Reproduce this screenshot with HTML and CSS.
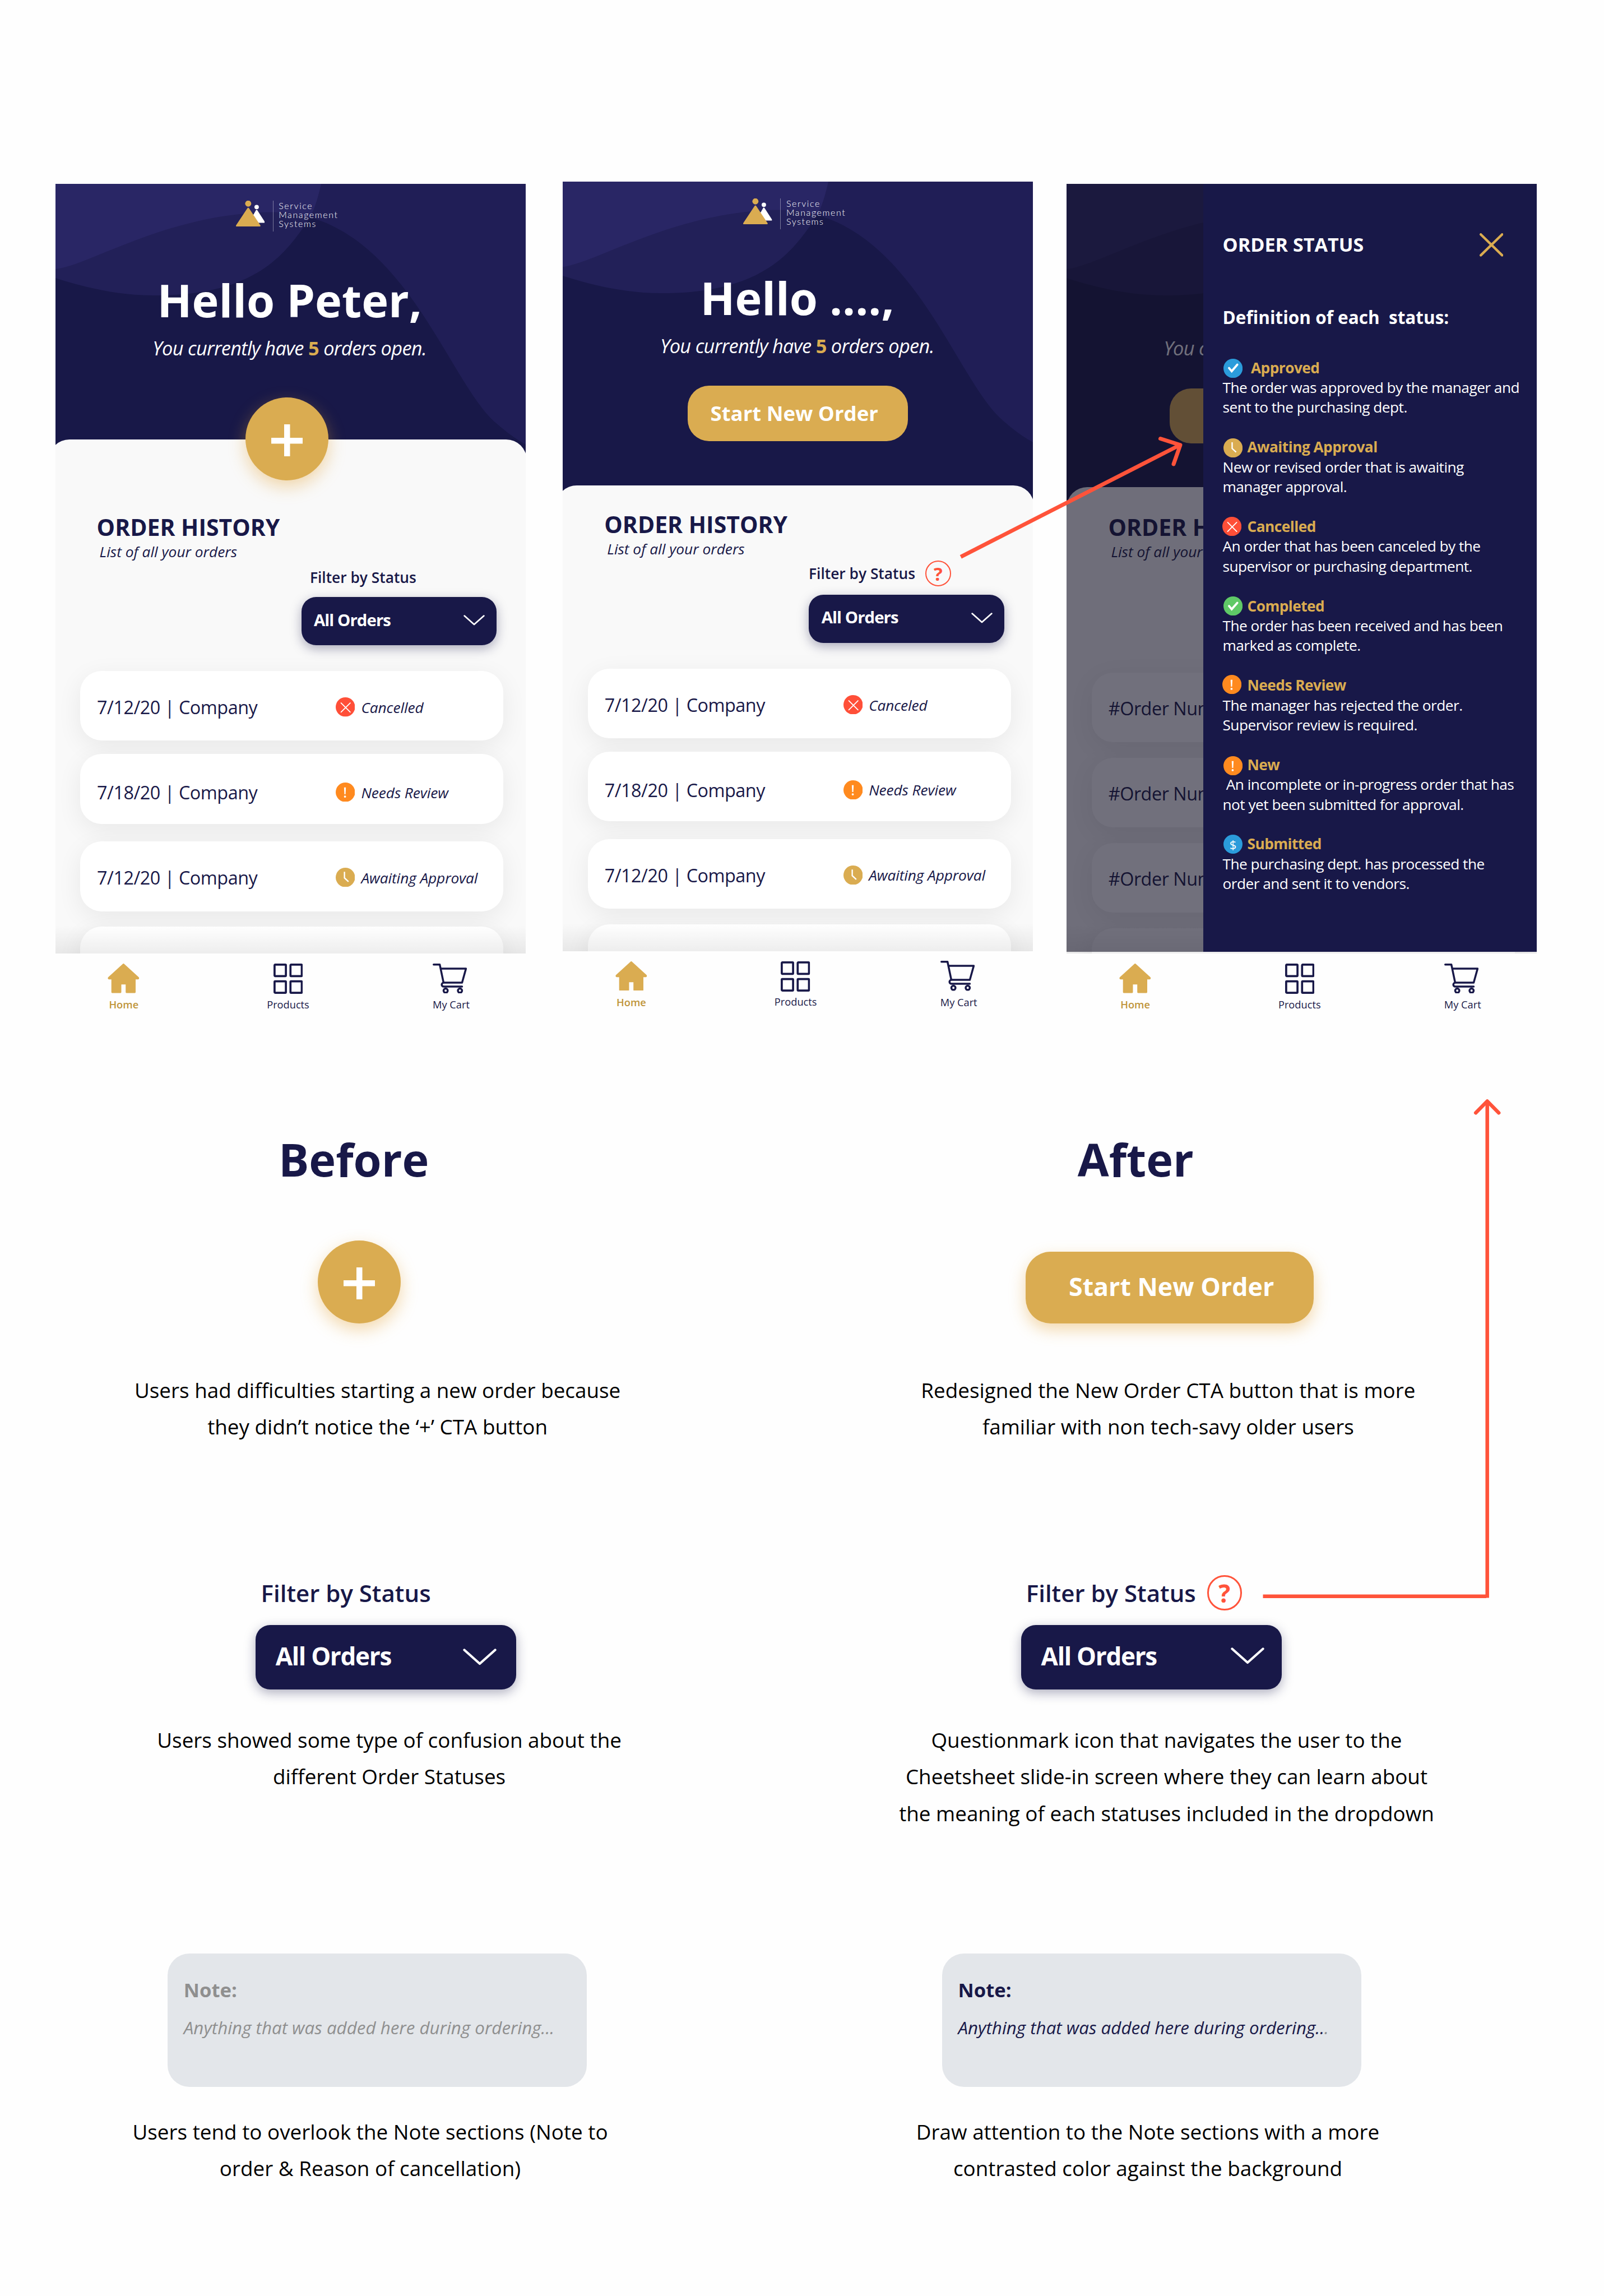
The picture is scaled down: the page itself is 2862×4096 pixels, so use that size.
FILE: index.html
```html
<!DOCTYPE html>
<html lang="en">
<head>
<meta charset="utf-8">
<title>Order history redesign</title>
<link rel="stylesheet" href="styles.css">
</head>
<body>
<svg class="defs" width="0" height="0" aria-hidden="true">
  <symbol id="logo" viewBox="36 78 236 213">
    <circle cx="205" cy="130" r="18" fill="#fff"/>
    <path d="M205 158L267 254H150Z" fill="#fff" stroke="#fff" stroke-width="11" stroke-linejoin="round"/>
    <circle cx="136" cy="102" r="25" fill="#daac51"/>
    <path d="M136 144L228 283H44Z" fill="#daac51" stroke="#daac51" stroke-width="16" stroke-linejoin="round"/>
  </symbol>
  <symbol id="home" viewBox="0 0 102 95">
    <path d="M51 3L98 46Q99 48 97 48H87V92H61V64H41V92H15V48H5Q3 48 4 46Z" fill="currentColor" stroke="currentColor" stroke-width="6" stroke-linejoin="round"/>
  </symbol>
  <symbol id="grid" viewBox="0 0 52.4 54">
    <g fill="none" stroke="currentColor" stroke-width="3.7"><rect x="1.9" y="1.9" width="20.2" height="20.4" rx="1"/><rect x="30.3" y="1.9" width="20.2" height="20.4" rx="1"/><rect x="1.9" y="31.7" width="20.2" height="20.4" rx="1"/><rect x="30.3" y="31.7" width="20.2" height="20.4" rx="1"/></g>
  </symbol>
  <symbol id="cart" viewBox="54 66 280 246">
    <g fill="none" stroke="currentColor" stroke-width="16" stroke-linecap="round" stroke-linejoin="round"><path d="M62 74H112L143 222M119 107H326L294 222H144A16 16 0 0 0 144 254H294"/><circle cx="160" cy="287" r="17"/><circle cx="277" cy="287" r="17"/></g>
  </symbol>
  <symbol id="chevron" viewBox="0 0 60 30">
    <path d="M2.5 2.5L30 27L57.500 2.500" fill="none" stroke="#fff" stroke-width="4.300" stroke-linecap="round" stroke-linejoin="round"/>
  </symbol>
  <symbol id="cancelled" viewBox="0 0 36 36">
    <circle cx="18" cy="18" r="18" fill="#ff4f38"/><path d="M10 10.500L27 27.500M27 10.500L10 27.500" stroke="#fff" stroke-width="1.900" stroke-linecap="round"/>
  </symbol>
  <symbol id="alert" viewBox="0 0 36 36">
    <circle cx="18" cy="18" r="18" fill="#ff8a1f"/><path d="M15.500 9.200H19L18.300 22H16.200Z" fill="#fff"/><circle cx="17.300" cy="26.200" r="2" fill="#fff"/>
  </symbol>
  <symbol id="clock" viewBox="0 0 36 36">
    <circle cx="18" cy="18" r="18" fill="#daac51"/><path d="M16.300 7.500V19L23.800 26" fill="none" stroke="#fff" stroke-width="2.500"/>
  </symbol>
  <symbol id="check-blue" viewBox="0 0 36 36">
    <circle cx="18" cy="18" r="18" fill="#2b9cdb"/><path d="M10.500 17.500L15.500 23.500L26 11" fill="none" stroke="#fff" stroke-width="4" stroke-linecap="round"/>
  </symbol>
  <symbol id="check-green" viewBox="0 0 36 36">
    <circle cx="18" cy="18" r="18" fill="#5fc967"/><path d="M10.500 18L15.500 24L26 12" fill="none" stroke="#fff" stroke-width="4" stroke-linecap="round"/>
  </symbol>
</svg>

<main class="board">
  <section class="phones">

    <article class="phone">
      <div class="screen screen-before">
        <svg class="waves" viewBox="0 0 839 470"><path class="wave" d="M0 0H474C465 40 457 58 444 75C400 140 340 199 176 199C110 199 50 184 0 168Z"/><path class="wave wave-2" d="M0 152C60 146 200 52 387 50.600C620 50 700 360 790 430Q815 452 839 465V0H0Z"/></svg>
        <header class="hero">
          <div class="brand"><svg class="brand-mark"><use href="#logo"/></svg><p class="brand-name">Service<br>Management<br>Systems</p></div>
          <h1 class="hello">Hello Peter,</h1>
          <p class="open-orders">You currently have <b>5</b> orders open.</p>
          <button class="add add-hero"><span class="plus"></span></button>
        </header>
        <div class="sheet">
          <h2 class="sheet-title">ORDER HISTORY</h2>
          <p class="sheet-sub">List of all your orders</p>
          <div class="filter filter-before">Filter by Status</div>
          <div class="select select-sheet"><span>All Orders</span><svg class="chevron"><use href="#chevron"/></svg></div>
          <ul class="orders">
            <li class="order order-1"><span class="order-id">7/12/20 | Company</span><svg class="status-icon"><use href="#cancelled"/></svg><em>Cancelled</em></li>
            <li class="order order-2"><span class="order-id">7/18/20 | Company</span><svg class="status-icon"><use href="#alert"/></svg><em>Needs Review</em></li>
            <li class="order order-3"><span class="order-id">7/12/20 | Company</span><svg class="status-icon"><use href="#clock"/></svg><em>Awaiting Approval</em></li>
            <li class="order"></li>
          </ul>
        </div>
      </div>
      <nav class="tabs">
        <a class="tab tab-active"><svg class="i-home"><use href="#home"/></svg><span>Home</span></a>
        <a class="tab"><svg class="i-grid"><use href="#grid"/></svg><span>Products</span></a>
        <a class="tab"><svg class="i-cart"><use href="#cart"/></svg><span>My Cart</span></a>
      </nav>
    </article>

    <article class="phone phone-after">
      <div class="screen">
        <svg class="waves" viewBox="0 0 839 470"><path class="wave" d="M0 0H474C465 40 457 58 444 75C400 140 340 199 176 199C110 199 50 184 0 168Z"/><path class="wave wave-2" d="M0 152C60 146 200 52 387 50.600C620 50 700 360 790 430Q815 452 839 465V0H0Z"/></svg>
        <header class="hero">
          <div class="brand"><svg class="brand-mark"><use href="#logo"/></svg><p class="brand-name">Service<br>Management<br>Systems</p></div>
          <h1 class="hello">Hello ....,</h1>
          <p class="open-orders">You currently have <b>5</b> orders open.</p>
          <button class="cta">Start New Order</button>
        </header>
        <div class="sheet">
          <h2 class="sheet-title">ORDER HISTORY</h2>
          <p class="sheet-sub">List of all your orders</p>
          <div class="filter filter-after">Filter by Status <span class="help">?</span></div>
          <div class="select select-sheet"><span>All Orders</span><svg class="chevron"><use href="#chevron"/></svg></div>
          <ul class="orders">
            <li class="order order-1"><span class="order-id">7/12/20 | Company</span><svg class="status-icon"><use href="#cancelled"/></svg><em>Canceled</em></li>
            <li class="order order-2"><span class="order-id">7/18/20 | Company</span><svg class="status-icon"><use href="#alert"/></svg><em>Needs Review</em></li>
            <li class="order order-3"><span class="order-id">7/12/20 | Company</span><svg class="status-icon"><use href="#clock"/></svg><em>Awaiting Approval</em></li>
            <li class="order"></li>
          </ul>
        </div>
      </div>
      <nav class="tabs">
        <a class="tab tab-active"><svg class="i-home"><use href="#home"/></svg><span>Home</span></a>
        <a class="tab"><svg class="i-grid"><use href="#grid"/></svg><span>Products</span></a>
        <a class="tab"><svg class="i-cart"><use href="#cart"/></svg><span>My Cart</span></a>
      </nav>
    </article>

    <article class="phone phone-drawer">
      <div class="screen">
        <svg class="waves" viewBox="0 0 839 470"><path class="wave" d="M0 0H474C465 40 457 58 444 75C400 140 340 199 176 199C110 199 50 184 0 168Z"/><path class="wave wave-2" d="M0 152C60 146 200 52 387 50.600C620 50 700 360 790 430Q815 452 839 465V0H0Z"/></svg>
        <header class="hero hero-plain">
          <p class="open-orders">You c</p>
          <div class="cta cta-wide"></div>
        </header>
        <div class="sheet">
          <h2 class="sheet-title">ORDER H</h2>
          <p class="sheet-sub">List of all your</p>
          <ul class="orders orders-drawer">
            <li class="order"><span class="order-id">#Order Num</span></li>
            <li class="order"><span class="order-id">#Order Num</span></li>
            <li class="order"><span class="order-id">#Order Num</span></li>
            <li class="order"></li>
          </ul>
        </div>
        <div class="scrim"></div>
        <aside class="drawer">
          <div class="drawer-head"><h2>ORDER STATUS</h2><svg class="close" viewBox="0 0 42.400 41.600"><path d="M2.200 2.200L40.200 39.400M40.200 2.200L2.200 39.400" stroke="#daac51" stroke-width="4.400" stroke-linecap="round"/></svg></div>
          <h3>Definition of each &nbsp;status:</h3>
          <dl>
            <dt class="s-approved"><svg><use href="#check-blue"/></svg>Approved</dt>
            <dd>The order was approved by the manager and<br>sent to the purchasing dept.</dd>
            <dt class="s-awaiting"><svg><use href="#clock"/></svg>Awaiting Approval</dt>
            <dd>New or revised order that is awaiting<br>manager approval.</dd>
            <dt class="s-cancelled"><svg><use href="#cancelled"/></svg>Cancelled</dt>
            <dd>An order that has been canceled by the<br>supervisor or purchasing department.</dd>
            <dt class="s-completed"><svg><use href="#check-green"/></svg>Completed</dt>
            <dd>The order has been received and has been<br>marked as complete.</dd>
            <dt class="s-review"><svg><use href="#alert"/></svg>Needs Review</dt>
            <dd>The manager has rejected the order.<br>Supervisor review is required.</dd>
            <dt class="s-new"><svg><use href="#alert"/></svg>New</dt>
            <dd>&nbsp;An incomplete or in-progress order that has<br>not yet been submitted for approval.</dd>
            <dt class="s-submitted"><span class="coin">$</span>Submitted</dt>
            <dd>The purchasing dept. has processed the<br>order and sent it to vendors.</dd>
          </dl>
        </aside>
      </div>
      <nav class="tabs">
        <a class="tab tab-active"><svg class="i-home"><use href="#home"/></svg><span>Home</span></a>
        <a class="tab"><svg class="i-grid"><use href="#grid"/></svg><span>Products</span></a>
        <a class="tab"><svg class="i-cart"><use href="#cart"/></svg><span>My Cart</span></a>
      </nav>
    </article>
  </section>

  <section class="compare">
    <div class="column column-before">
      <h2 class="column-title">Before</h2>
      <div class="demo"><button class="add"><span class="plus"></span></button></div>
      <p class="caption caption-cta">Users had difficulties starting a new order because<br>they didn’t notice the ‘+’ CTA button</p>
      <div class="filter filter-lg">Filter by Status</div>
      <div class="select select-lg"><span>All Orders</span><svg class="chevron"><use href="#chevron"/></svg></div>
      <p class="caption caption-filter">Users showed some type of confusion about the<br>different Order Statuses</p>
      <div class="note note-muted"><h3>Note:</h3><p>Anything that was added here during ordering...</p></div>
      <p class="caption caption-note">Users tend to overlook the Note sections (Note to<br>order &amp; Reason of cancellation)</p>
    </div>
    <div class="column column-after">
      <h2 class="column-title">After</h2>
      <div class="demo"><button class="cta cta-lg">Start New Order</button></div>
      <p class="caption caption-cta">Redesigned the New Order CTA button that is more<br>familiar with non tech-savy older users</p>
      <div class="filter filter-lg">Filter by Status <span class="help help-lg">?</span></div>
      <div class="select select-lg"><span>All Orders</span><svg class="chevron"><use href="#chevron"/></svg></div>
      <p class="caption caption-filter">Questionmark icon that navigates the user to the<br>Cheetsheet slide-in screen where they can learn about<br>the meaning of each statuses included in the dropdown</p>
      <div class="note"><h3>Note:</h3><p>Anything that was added here during ordering..<span class="faded">.</span></p></div>
      <p class="caption caption-note">Draw attention to the Note sections with a more<br>contrasted color against the background</p>
    </div>
  </section>

  <svg class="arrows" viewBox="0 0 2862 4096">
    <g fill="none" stroke="#ff533a">
      <path stroke-width="7" d="M1714.300 993.300L2106 793.500"/>
      <path stroke-width="7" stroke-linecap="round" stroke-linejoin="round" d="M2070.500 782.500L2106 793.800L2094 828"/>
      <path stroke-width="6.500" d="M2253.500 2847.800H2652M2653.700 2850.600V1965"/>
      <path stroke-width="6.500" stroke-linecap="round" stroke-linejoin="round" d="M2633.200 1985.300L2653.700 1964.500L2674.200 1985.300"/>
    </g>
  </svg>
</main>
</body>
</html>
```
FILE: styles.css
```css
:root {
  --navy: #181848;
  --gold: #daac51;
  --coral: #ff533a;
}

* { box-sizing: border-box; margin: 0; padding: 0; }

body {
  width: 2862px;
  background: #fefefe;
  color: var(--navy);
  font-family: "Open Sans", sans-serif;
}

ul { list-style: none; }
button { border: 0; font: inherit; text-align: left; }
.defs { position: absolute; }

.board {
  position: relative;
  width: 2862px;
  height: 4096px;
  overflow: hidden;
}

.arrows {
  position: absolute;
  z-index: 10;
  inset: 0;
  width: 2862px;
  height: 4096px;
  pointer-events: none;
}

/* Phones */

.phones {
  display: flex;
  align-items: flex-start;
  height: 1812px;
  padding: 327.9px 0 0 98.6px;
}

.phone {
  --sheet-top: 542.7px;
  flex: none;
  width: 839px;
}
.phone-after { margin: -4.2px 60.1px 0 66.7px; }
.phone-drawer { --sheet-top: 541.3px; }

.screen {
  position: relative;
  width: 839px;
  height: 1372.8px;
  overflow: hidden;
  background: linear-gradient(var(--navy) 1000px, #f9f9f9 1000px);
}
.screen-before { --sheet-top: 456.1px; }

.waves { position: absolute; top: 0; left: 0; width: 839px; height: 470px; }
.wave { fill: #7c68e8; fill-opacity: .1; }
.wave-2 { fill-opacity: .09; }

.hero {
  position: relative;
  z-index: 1;
  height: var(--sheet-top);
  padding-top: 30px;
}

.brand {
  display: flex;
  height: 55.1px;
  margin-left: 322.2px;
}
.brand-mark { width: 51.6px; height: 46.5px; }
.brand-name {
  margin: .5px 0 0 14.4px;
  height: 54.6px;
  padding: 1px 0 0 9.5px;
  border-left: 1px solid rgba(255, 255, 255, .4);
  color: #fff;
  font: 300 16px/16.050px Lato, sans-serif;
  letter-spacing: 1.6px;
}

.hello {
  margin: 71px 2.600px 0 0;
  text-align: center;
  font-size: 81.060px;
  font-weight: 700;
  line-height: 101px;
  color: #fff;
}
.open-orders {
  margin: 11.8px 3px 0 0;
  text-align: center;
  font-size: 34.4px;
  font-style: italic;
  line-height: 48px;
  letter-spacing: -.7px;
  color: #fff;
}
.open-orders b { font-style: normal; color: var(--gold); }

.hero-plain { padding-top: 269px; }
.hero-plain .open-orders { margin: 0; padding-left: 173px; text-align: left; }

.add {
  display: flex;
  align-items: center;
  justify-content: center;
  width: 148.4px;
  height: 148.2px;
  border-radius: 50%;
  background: var(--gold);
  box-shadow: 0 11px 30px rgba(228, 160, 50, .4);
}
.add-hero { margin: 64.4px 0 0 339.1px; }
.plus {
  width: 56px;
  height: 57px;
  margin-top: 5px;
  background:
    linear-gradient(#fff, #fff) center / 56px 10.500px no-repeat,
    linear-gradient(#fff, #fff) center / 10.500px 57px no-repeat;
}

.cta {
  display: block;
  width: 393px;
  height: 98.4px;
  margin: 47.9px 0 0 222.9px;
  padding: 0 0 1px 40.400px;
  border-radius: 38px;
  background: var(--gold);
  color: #fff;
  font-size: 36.600px;
  font-weight: 700;
  line-height: 50px;
}
.cta-wide { width: 472px; margin-left: 183.400px; }

.sheet {
  height: calc(1374.800px - var(--sheet-top));
  margin: 0 -2px 0 -12px;
  padding: calc(585.800px - var(--sheet-top)) 0 0 12px;
  border-radius: 37px 37px 0 0;
  background: #f9f9f9;
}
.phone-drawer .sheet { margin-left: 0; padding-left: 0; }

.sheet-title {
  padding-left: 74px;
  font-size: 40.950px;
  line-height: 52px;
}
.sheet-sub {
  padding-left: 79px;
  font-size: 26.300px;
  font-style: italic;
  line-height: 36px;
}

.filter {
  display: flex;
  align-items: center;
  height: 46px;
  font-size: 26.330px;
  font-weight: 600;
}
.filter-before { margin: 5px 0 12.100px 454.400px; }
.filter-after { margin: 2.600px 0 14.500px 438.800px; }

.help {
  display: flex;
  align-items: center;
  justify-content: center;
  width: 46px;
  height: 46px;
  margin-left: 17.800px;
  border: 2.200px solid var(--coral);
  border-radius: 50%;
  color: var(--coral);
  font-size: 33px;
  font-weight: 700;
  line-height: 1;
}

.select {
  display: flex;
  justify-content: space-between;
  width: 348.600px;
  height: 86.400px;
  padding: 20.800px 21.500px 0 22.200px;
  border-radius: 26px;
  background: var(--navy);
  box-shadow: 0 6px 20px rgba(24, 24, 72, .35);
  color: #fff;
  font-size: 29.400px;
  font-weight: 700;
  line-height: 40px;
  letter-spacing: -.950px;
}
.select-sheet { margin-left: 439.200px; }
.select .chevron { width: 38px; height: 19px; margin-top: 11.800px; }

.orders { padding: 45.600px 0 0 44.400px; }
.order {
  display: grid;
  grid-template-columns: 426px 45.500px 1fr;
  align-items: start;
  width: 755px;
  height: 124.500px;
  padding: 42.400px 0 0 30px;
  border-radius: 38px;
  background: #fff;
  box-shadow: 0 11px 45px rgba(0, 0, 0, .07);
  line-height: 44px;
}
.order-1 { margin-bottom: 23.900px; }
.order-2 { margin-bottom: 31.500px; padding-top: 45.700px; }
.order-3 { margin-bottom: 27.700px; padding-top: 41.800px; }
.order-id { font-size: 32.400px; letter-spacing: -.500px; }
.order em { margin-top: .700px; font-size: 26.300px; letter-spacing: -.120px; }
.status-icon { width: 34.500px; height: 34.500px; margin-top: 5px; }

.orders-drawer { padding-top: 198.200px; }
.orders-drawer .order { margin-bottom: 27.500px; padding-top: 41.200px; }

.sheet::after {
  content: "";
  position: absolute;
  right: 0;
  bottom: 0;
  left: 0;
  height: 50px;
  background: linear-gradient(rgba(0, 0, 0, 0), rgba(0, 0, 0, .07));
}

.scrim {
  position: absolute;
  z-index: 2;
  inset: 0 0 2.600px;
  background: rgba(18, 16, 36, .6);
}

.drawer {
  position: absolute;
  z-index: 3;
  top: 0;
  right: 0;
  bottom: 2.600px;
  width: 594.900px;
  padding: 84.600px 0 0 34px;
  background: var(--navy);
  color: #fff;
}
.drawer-head {
  display: flex;
  justify-content: space-between;
  padding-right: 60px;
}
.drawer-head h2 { font-size: 34.120px; line-height: 48px; }
.close { width: 42.400px; height: 41.600px; margin-top: 3.500px; }
.drawer h3 {
  margin: 83.800px 0 50.400px;
  font-size: 31.500px;
  line-height: 44px;
}
.drawer dl { font-size: 26.300px; line-height: 35.410px; letter-spacing: -.550px; }
.drawer dt {
  display: grid;
  grid-template-columns: var(--gap, 44px) 1fr;
  height: 35.410px;
  color: var(--gold);
  font-weight: 700;
}
.drawer dt svg,
.coin {
  width: 34.200px;
  height: 34.200px;
  margin: var(--dy) 0 0 var(--dx, 1.200px);
}
.coin {
  border-radius: 50%;
  background: #2b9cdb;
  color: #fff;
  font-size: 22px;
  font-weight: 400;
  line-height: 34px;
  text-align: center;
}
.drawer dd { margin-bottom: 35.410px; white-space: nowrap; }
.s-approved { --gap: 50.500px; --dy: .900px; }
.s-awaiting { --dy: 2.100px; }
.s-cancelled { --dy: -.300px; --dx: -.400px; }
.s-completed { --dy: .300px; }
.s-review { --dy: -.700px; --dx: -.400px; }
.s-new { --dy: 1.800px; }
.s-submitted { --dy: .800px; }

/* Bottom tabs */

.tabs {
  display: grid;
  grid-template-columns: 244.400px 342px 240px;
  padding-top: 17.900px;
}
.tab {
  display: flex;
  flex-direction: column;
  align-items: center;
  font-size: 18.240px;
  line-height: 26px;
}
.tab svg { margin-bottom: 5.400px; }
.tab-active { color: #c09539; font-weight: 600; }
.i-home { width: 56.700px; height: 52.700px; margin-top: .300px; color: var(--gold); }
.tab-active svg { margin-bottom: 7.400px; }
.i-grid { width: 52.400px; height: 54px; margin-top: .700px; }
.i-cart { width: 61.200px; height: 53.800px; margin: 0 4px 0 0; }
.tab .i-cart { margin-bottom: 6.500px; }

/* Comparison */

.compare {
  display: grid;
  grid-template-columns: 1431px 1431px;
}
.column { display: flex; flex-direction: column; align-items: flex-start; }
.column-title {
  margin-top: 201.400px;
  font-size: 81px;
  line-height: 110px;
}
.demo {
  display: flex;
  align-items: flex-end;
  height: 148px;
  margin-top: 89.500px;
}
.caption {
  width: 1000px;
  color: #000;
  font-size: 36.850px;
  line-height: 65.300px;
  text-align: center;
  white-space: nowrap;
}
.caption-cta { margin-top: 87.200px; }
.caption-filter { height: 195px; margin-top: 58.300px; }
.caption-note { margin-top: 47.400px; }

.filter-lg {
  height: 62.500px;
  margin-top: 231.700px;
  font-size: 42px;
}
.help-lg {
  width: 62.500px;
  height: 62.500px;
  margin-left: 19.800px;
  border-width: 3.300px;
  font-size: 44px;
}
.select-lg {
  width: 465.200px;
  height: 115px;
  margin-top: 25.900px;
  padding: 24.800px 35.500px 0 35.500px;
  font-size: 44px;
  line-height: 60px;
  letter-spacing: -1.300px;
}
.select-lg .chevron { width: 60px; height: 30px; margin-top: 17px; }

.note {
  width: 748.500px;
  height: 238.700px;
  margin-top: 217.700px;
  padding: 40.900px 0 0 29px;
  border-radius: 39px;
  background: #e3e6ea;
}
.note h3 { font-size: 34.700px; line-height: 48px; }
.note p { margin-top: 21.500px; font-size: 31.340px; font-style: italic; line-height: 44px; }
.note-muted { color: #8f8f8f; }
.faded { color: #8f8f8f; }

.column-before .column-title { margin-left: 496.900px; }
.column-before .demo { margin-left: 566.600px; }
.column-before .caption-cta { margin-left: 173.600px; }
.column-before .filter-lg { margin-left: 465.600px; }
.column-before .select-lg { margin-left: 456.200px; }
.column-before .caption-filter { margin-left: 194.600px; }
.column-before .note { margin-left: 298.800px; }
.column-before .caption-note { margin-left: 160.500px; }

.column-after .column-title { margin-left: 491.800px; }
.column-after .demo { margin-left: 399px; }
.column-after .caption-cta { margin-left: 153.400px; }
.column-after .filter-lg { margin-left: 399.800px; }
.column-after .select-lg { margin-left: 391.100px; padding-right: 31px; }
.column-after .select-lg .chevron { margin-top: 15.500px; }
.column-after .caption-filter { margin-left: 150.500px; }
.column-after .note { margin-left: 249.500px; }
.column-after .caption-note { margin-left: 117px; }

.cta-lg {
  width: 514px;
  height: 128px;
  margin: 0;
  padding: 0 0 4.500px 77px;
  border-radius: 44.600px;
  box-shadow: 0 11px 28px rgba(228, 160, 50, .4);
  font-size: 44.750px;
  line-height: 60px;
}
```
